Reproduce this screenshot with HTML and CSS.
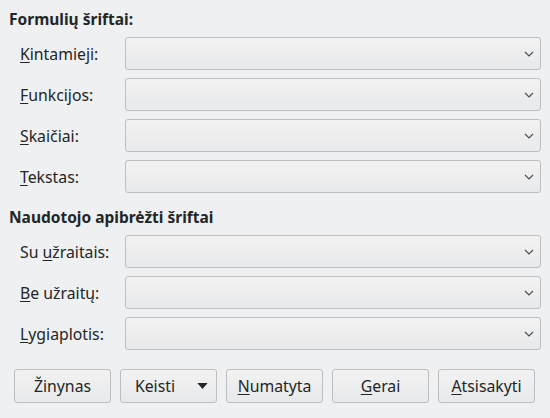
FILE: index.html
```html
<!DOCTYPE html>
<html lang="lt">
<head>
    <meta charset="UTF-8">
    <title>Šriftai</title>
    <link rel="stylesheet" href="styles.css">
</head>
<body>
    <div class="dialog">
        <div class="group-title first">Formulių šriftai:</div>
        <div class="rows">
            <div class="row">
                <span class="label"><u>K</u>intamieji:</span>
                <div class="combo"><svg class="chevron" viewBox="0 0 10 6"><path d="M1 1 L5 5 L9 1"/></svg></div>
            </div>
            <div class="row">
                <span class="label"><u>F</u>unkcijos:</span>
                <div class="combo"><svg class="chevron" viewBox="0 0 10 6"><path d="M1 1 L5 5 L9 1"/></svg></div>
            </div>
            <div class="row">
                <span class="label"><u>S</u>kaičiai:</span>
                <div class="combo"><svg class="chevron" viewBox="0 0 10 6"><path d="M1 1 L5 5 L9 1"/></svg></div>
            </div>
            <div class="row">
                <span class="label"><u>T</u>ekstas:</span>
                <div class="combo"><svg class="chevron" viewBox="0 0 10 6"><path d="M1 1 L5 5 L9 1"/></svg></div>
            </div>
        </div>

        <div class="group-title second">Naudotojo apibrėžti šriftai</div>
        <div class="rows">
            <div class="row">
                <span class="label">Su <u>u</u>žraitais:</span>
                <div class="combo"><svg class="chevron" viewBox="0 0 10 6"><path d="M1 1 L5 5 L9 1"/></svg></div>
            </div>
            <div class="row">
                <span class="label"><u>B</u>e užraitų:</span>
                <div class="combo"><svg class="chevron" viewBox="0 0 10 6"><path d="M1 1 L5 5 L9 1"/></svg></div>
            </div>
            <div class="row">
                <span class="label"><u>L</u>ygiaplotis:</span>
                <div class="combo"><svg class="chevron" viewBox="0 0 10 6"><path d="M1 1 L5 5 L9 1"/></svg></div>
            </div>
        </div>

        <div class="buttons">
            <button>Žinynas</button>
            <button class="menu-button">Keisti <svg class="triangle" viewBox="0 0 12 7"><path d="M0 0 H12 L6 7 Z"/></svg></button>
            <button><u>N</u>umatyta</button>
            <button><u>G</u>erai</button>
            <button><u>A</u>tsisakyti</button>
        </div>
    </div>
</body>
</html>
```

FILE: styles.css
```css
/* General styles */
body {
    margin: 0;
    background-color: #eff0f1;
    font-family: "Noto Sans", "Open Sans", sans-serif;
    font-size: 15.8px;
    color: #232627;
}

.dialog {
    padding: 9px 9px 0 9px;
}

u {
    text-decoration-thickness: 1px;
    text-underline-offset: 2px;
}

/* Group headings */
.group-title {
    font-weight: bold;
    font-size: 15.5px;
    line-height: 20px;
    margin-bottom: 8px;
}

.group-title.second {
    margin-top: 14px;
}

/* Label + combo rows */
.rows {
    display: flex;
    flex-direction: column;
    gap: 8px;
}

.row {
    display: flex;
    align-items: center;
    height: 33px;
}

.label {
    width: 105px;
    padding-left: 11px;
    flex-shrink: 0;
    white-space: nowrap;
}

.combo {
    flex: 1;
    height: 33px;
    border: 1px solid #bcbebf;
    border-radius: 3px;
    background: linear-gradient(#f2f2f3, #e8e9ea);
    display: flex;
    align-items: center;
    justify-content: flex-end;
    padding-right: 6px;
    box-sizing: border-box;
}

.chevron {
    width: 10px;
    height: 6px;
    fill: none;
    stroke: #4d4f51;
    stroke-width: 1.2;
}

/* Button row */
.buttons {
    display: flex;
    gap: 9px;
    padding-left: 5px;
    margin-top: 19px;
}

button {
    width: 97px;
    height: 34px;
    border: 1px solid #bcbebf;
    border-radius: 3px;
    background: linear-gradient(#f2f2f3, #e8e9ea);
    font-family: inherit;
    font-size: 15.8px;
    color: #232627;
    padding: 0;
}

.menu-button {
    display: flex;
    align-items: center;
    justify-content: flex-end;
    gap: 22px;
    padding-right: 8px;
}

.triangle {
    width: 11px;
    height: 6px;
    fill: #232627;
}
```
